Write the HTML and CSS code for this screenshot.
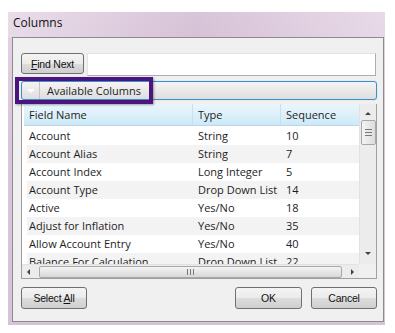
FILE: index.html
```html
<!DOCTYPE html>
<html lang="en">
<head>
  <meta charset="UTF-8" />
  <title>Columns</title>
  <link rel="stylesheet" href="styles.css">
</head>
<body>

  <div class="window">
    <div class="titlebar">Columns</div>

    <div class="client">
      <!-- search row -->
      <div class="find-row">
        <button class="btn find-btn"><u>F</u>ind Next</button>
        <input class="find-input" type="text" />
      </div>

      <!-- grid -->
      <div class="group">
        <div class="group-bar">
          <span class="drop-arrow"></span>
          <span class="group-title">Available Columns</span>
        </div>

        <div class="grid">
          <div class="grid-main">
            <div class="grid-body">
              <div class="grid-rows">
                <div class="row head">
                  <span class="c1">Field Name</span><span class="c2">Type</span><span class="c3">Sequence</span>
                </div>
                <div class="row"><span class="c1">Account</span><span class="c2">String</span><span class="c3">10</span></div>
                <div class="row alt"><span class="c1">Account Alias</span><span class="c2">String</span><span class="c3">7</span></div>
                <div class="row"><span class="c1">Account Index</span><span class="c2">Long Integer</span><span class="c3">5</span></div>
                <div class="row alt"><span class="c1">Account Type</span><span class="c2">Drop Down List</span><span class="c3">14</span></div>
                <div class="row"><span class="c1">Active</span><span class="c2">Yes/No</span><span class="c3">18</span></div>
                <div class="row alt"><span class="c1">Adjust for Inflation</span><span class="c2">Yes/No</span><span class="c3">35</span></div>
                <div class="row"><span class="c1">Allow Account Entry</span><span class="c2">Yes/No</span><span class="c3">40</span></div>
                <div class="row alt"><span class="c1">Balance For Calculation</span><span class="c2">Drop Down List</span><span class="c3">22</span></div>
              </div>

              <div class="vscroll">
                <span class="arrow up"></span>
                <div class="vthumb"><i></i><i></i><i></i></div>
                <div class="vtrack"></div>
                <span class="arrow down"></span>
              </div>
            </div>

            <div class="hscroll-row">
              <div class="hscroll">
                <span class="arrow left"></span>
                <div class="hthumb"><i></i><i></i><i></i></div>
                <span class="arrow right"></span>
              </div>
              <div class="corner"></div>
            </div>
          </div>
        </div>
      </div>

      <!-- buttons -->
      <div class="button-row">
        <button class="btn wide">Select <u>A</u>ll</button>
        <div class="spacer"></div>
        <button class="btn wide ok">OK</button>
        <button class="btn wide">Cancel</button>
      </div>

      <div class="highlight"></div>
    </div>
  </div>

</body>
</html>
```

FILE: styles.css
```css
* {
  box-sizing: border-box;
  margin: 0;
  padding: 0;
}

body {
  background: #ffffff;
  font-family: 'Open Sans', 'Noto Sans', sans-serif;
  font-size: 11px;
  color: #1e1e1e;
}

.window {
  margin: 12px 0 0 8px;
  width: 377px;
  height: 313px;
  background: linear-gradient(to bottom, #e4d4e4 0%, #d9c6d9 40%, #d6c3d6 100%);
  padding: 0 1px 3px 4px;
  display: flex;
  flex-direction: column;
}

.titlebar {
  height: 25px;
  line-height: 22px;
  font-size: 12px;
  color: #111;
  background: linear-gradient(to right, rgba(255,255,255,0.2), rgba(180,150,180,0.25) 50%, rgba(255,255,255,0.15));
  margin: 0 -1px 0 -4px;
  padding-left: 5px;
}

.client {
  position: relative;
  flex: 1;
  background: #f0f0f0;
  border: 1px solid #8c8a8c;
  padding: 15px 6px 0 8px;
  display: flex;
  flex-direction: column;
}

/* buttons */
.btn {
  font-family: 'Liberation Sans', Arial, sans-serif;
  font-size: 10.5px;
  letter-spacing: -0.2px;
  color: #111;
  background: linear-gradient(to bottom, #f4f4f4 0%, #ebebeb 50%, #dddddd 51%, #cfcfcf 100%);
  border: 1px solid #707070;
  border-radius: 3px;
  height: 21px;
}

.find-row {
  display: flex;
  gap: 3px;
  height: 23px;
}

.find-btn {
  width: 63px;
}

.find-input {
  width: 289px;
  height: 23px;
  border: 1px solid #abadb3;
  border-top-color: #e3e3e3;
  border-left-color: #e3e3e3;
  background: #fff;
}

/* group / grid */
.group {
  margin-top: 5px;
  width: 356px;
  display: flex;
  flex-direction: column;
}

.group-bar {
  height: 19px;
  border: 1px solid #3c8fc8;
  border-radius: 3px;
  background: linear-gradient(to bottom, #f4f4f4, #dedede);
  display: flex;
  align-items: center;
  box-shadow: 0 0 1px #7ebbe6;
}

.drop-arrow {
  width: 17px;
  height: 100%;
  border-right: 1px solid #c4c4c4;
  margin-left: 1px;
  position: relative;
}

.drop-arrow::after {
  content: "";
  position: absolute;
  left: 4px;
  top: 7px;
  border-left: 4px solid transparent;
  border-right: 4px solid transparent;
  border-top: 4px solid #ffffff;
}

.group-title {
  margin-left: 7px;
  font-size: 11px;
}

.grid {
  margin-top: 4px;
  border: 1px solid #a0a0a0;
  border-top: none;
  background: #fff;
  padding-left: 2px;
}

.grid-main {
  display: flex;
  flex-direction: column;
}

.grid-body {
  display: flex;
  height: 160px;
  overflow: hidden;
}

.grid-rows {
  flex: 1;
  overflow: hidden;
  padding-left: 3px;
}

.row {
  display: flex;
  height: 18px;
  line-height: 18px;
  white-space: nowrap;
}

.row.alt {
  background: #f3f3f3;
}

.row.head {
  height: 22px;
  line-height: 21px;
  background: linear-gradient(to bottom, #eaf6fc 0%, #dcf0fa 55%, #cde8f7 100%);
  border-bottom: 1px solid #b9d7ea;
  margin-left: -3px;
  padding-left: 3px;
  margin-bottom: 1px;
}

.row span {
  overflow: hidden;
  padding-left: 2px;
}

.c1 { width: 166px; }
.c2 { width: 88px; }
.c3 { width: 76px; }

.row.head .c1,
.row.head .c2 {
  border-right: 1px solid #c8dfee;
}

.row .c2,
.row .c3 {
  padding-left: 5px;
}

/* scrollbars */
.vscroll {
  width: 17px;
  background: #ececec;
  border-left: 1px solid #e2e2e2;
  display: flex;
  flex-direction: column;
  align-items: center;
}

.vthumb {
  width: 15px;
  height: 25px;
  border: 1px solid #a8a8a8;
  border-radius: 2px;
  background: linear-gradient(to right, #f4f4f4, #dcdcdc);
  display: flex;
  flex-direction: column;
  align-items: center;
  justify-content: center;
  gap: 2px;
}

.vthumb i {
  width: 7px;
  height: 1px;
  background: #777;
}

.vtrack {
  flex: 1;
}

.arrow {
  width: 0;
  height: 0;
  display: block;
}

.arrow.up {
  margin: 8px 0 5px;
  border-left: 3px solid transparent;
  border-right: 3px solid transparent;
  border-bottom: 3px solid #404040;
}

.arrow.down {
  margin: 0 0 9px;
  border-left: 3px solid transparent;
  border-right: 3px solid transparent;
  border-top: 3px solid #404040;
}

.hscroll-row {
  display: flex;
  height: 14px;
  margin-left: -2px;
}

.hscroll {
  flex: 1;
  background: #ececec;
  border-top: 1px solid #e2e2e2;
  display: flex;
  align-items: center;
  padding: 0 5px;
  gap: 9px;
}

.arrow.left {
  border-top: 3px solid transparent;
  border-bottom: 3px solid transparent;
  border-right: 3px solid #404040;
}

.arrow.right {
  border-top: 3px solid transparent;
  border-bottom: 3px solid transparent;
  border-left: 3px solid #404040;
}

.hthumb {
  flex: 1;
  height: 12px;
  border: 1px solid #a8a8a8;
  border-radius: 2px;
  background: linear-gradient(to bottom, #f4f4f4, #d8d8d8);
  display: flex;
  justify-content: center;
  align-items: center;
  gap: 2px;
}

.hthumb i {
  width: 1px;
  height: 6px;
  background: #777;
}

.corner {
  width: 17px;
  background: #f0f0f0;
}

/* bottom */
.button-row {
  margin-top: 8px;
  display: flex;
  gap: 9px;
  width: 356px;
}

.btn.wide {
  width: 66px;
  height: 22px;
}

.btn.ok {
  width: 67px;
}

.spacer {
  flex: 1;
}

/* annotation box over the grid header */
.highlight {
  position: absolute;
  left: 2px;
  top: 39px;
  width: 138px;
  height: 27px;
  border: 4px solid #4b1580;
  box-shadow: 1px 1px 2px rgba(0,0,0,0.35);
}
```
